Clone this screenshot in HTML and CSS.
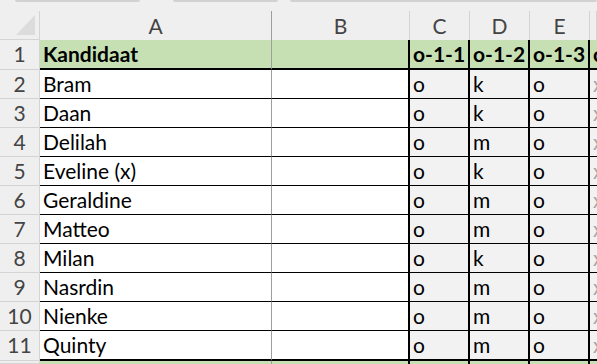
FILE: index.html
```html
<!DOCTYPE html>
<html lang="nl">
<head>
    <meta charset="UTF-8">
    <title>Kandidaten</title>
    <link rel="stylesheet" href="styles.css">
</head>
<body>

<div class="topbar">
    <span class="tab tab-name"></span>
    <span class="tab tab-fx"></span>
    <span class="tab tab-formula"></span>
</div>

<div class="sheet">
    <div class="row colheads">
        <div class="corner">
            <svg width="39" height="28" viewBox="0 0 39 28"><polygon points="35,4 35,24 16,24" fill="#dcdcdc"/></svg>
        </div>
        <div class="ch ch-a">A</div>
        <div class="ch">B</div>
        <div class="ch">C</div>
        <div class="ch">D</div>
        <div class="ch">E</div>
        <div class="ch"></div>
    </div>

    <div class="row first">
        <div class="rh">1</div>
        <div class="cell name bold">Kandidaat</div>
        <div class="cell empty"></div>
        <div class="cell score bold">o-1-1</div>
        <div class="cell score bold">o-1-2</div>
        <div class="cell score bold">o-1-3</div>
        <div class="cell last bold">o-1-4</div>
    </div>

    <div class="row">
        <div class="rh">2</div>
        <div class="cell name">Bram</div>
        <div class="cell empty"></div>
        <div class="cell score">o</div>
        <div class="cell score">k</div>
        <div class="cell score">o</div>
        <div class="cell last">x</div>
    </div>
    <div class="row">
        <div class="rh">3</div>
        <div class="cell name">Daan</div>
        <div class="cell empty"></div>
        <div class="cell score">o</div>
        <div class="cell score">k</div>
        <div class="cell score">o</div>
        <div class="cell last">x</div>
    </div>
    <div class="row">
        <div class="rh">4</div>
        <div class="cell name">Delilah</div>
        <div class="cell empty"></div>
        <div class="cell score">o</div>
        <div class="cell score">m</div>
        <div class="cell score">o</div>
        <div class="cell last">x</div>
    </div>
    <div class="row">
        <div class="rh">5</div>
        <div class="cell name">Eveline (x)</div>
        <div class="cell empty"></div>
        <div class="cell score">o</div>
        <div class="cell score">k</div>
        <div class="cell score">o</div>
        <div class="cell last">x</div>
    </div>
    <div class="row">
        <div class="rh">6</div>
        <div class="cell name">Geraldine</div>
        <div class="cell empty"></div>
        <div class="cell score">o</div>
        <div class="cell score">m</div>
        <div class="cell score">o</div>
        <div class="cell last">x</div>
    </div>
    <div class="row">
        <div class="rh">7</div>
        <div class="cell name">Matteo</div>
        <div class="cell empty"></div>
        <div class="cell score">o</div>
        <div class="cell score">m</div>
        <div class="cell score">o</div>
        <div class="cell last">x</div>
    </div>
    <div class="row">
        <div class="rh">8</div>
        <div class="cell name">Milan</div>
        <div class="cell empty"></div>
        <div class="cell score">o</div>
        <div class="cell score">k</div>
        <div class="cell score">o</div>
        <div class="cell last">x</div>
    </div>
    <div class="row">
        <div class="rh">9</div>
        <div class="cell name">Nasrdin</div>
        <div class="cell empty"></div>
        <div class="cell score">o</div>
        <div class="cell score">m</div>
        <div class="cell score">o</div>
        <div class="cell last">x</div>
    </div>
    <div class="row">
        <div class="rh">10</div>
        <div class="cell name">Nienke</div>
        <div class="cell empty"></div>
        <div class="cell score">o</div>
        <div class="cell score">m</div>
        <div class="cell score">o</div>
        <div class="cell last">x</div>
    </div>
    <div class="row final">
        <div class="rh">11</div>
        <div class="cell name">Quinty</div>
        <div class="cell empty"></div>
        <div class="cell score">o</div>
        <div class="cell score">m</div>
        <div class="cell score">o</div>
        <div class="cell last">x</div>
    </div>
    <div class="row next">
        <div class="rh"></div>
        <div class="cell name"></div>
        <div class="cell empty"></div>
        <div class="cell score"></div>
        <div class="cell score"></div>
        <div class="cell score"></div>
        <div class="cell last"></div>
    </div>
</div>

</body>
</html>
```

FILE: styles.css
```css
* {
    box-sizing: border-box;
}
body {
    margin: 0;
    background-color: #efefef;
    font-family: Lato, "Liberation Sans", sans-serif;
    font-size: 21px;
    color: #000000;
    overflow: hidden;
}
.topbar {
    height: 11px;
    display: flex;
    align-items: flex-start;
}
.tab {
    height: 2px;
    background-color: #d2d2d2;
    border-radius: 0 0 2px 2px;
}
.tab-name {
    margin-left: 15px;
    width: 125px;
}
.tab-fx {
    margin-left: 33px;
    width: 105px;
}
.tab-formula {
    margin-left: 12px;
    flex: 1;
}
.row {
    display: grid;
    grid-template-columns: 40px 232px 138px 60px 60px 60px 1fr;
    height: 29px;
}
.row.first {
    height: 30px;
}
.row.final {
    height: 30px;
}
.row.next {
    height: 3px;
}
/* kolomkoppen */
.colheads {
    background-color: #efefef;
    color: #444444;
}
.corner {
    border-right: 1px solid #d4d4d4;
    border-bottom: 1px solid #d4d4d4;
    height: 29px;
}
.corner svg {
    display: block;
}
.ch {
    text-align: center;
    line-height: 28px;
    padding-top: 1px;
    border-right: 1px solid #d4d4d4;
    border-bottom: 1px solid #d4d4d4;
}
.ch-a {
    border-right-color: #9e9e9e;
}
/* rijnummers */
.rh {
    background-color: #efefef;
    color: #444444;
    text-align: center;
    line-height: 28px;
    border-right: 1px solid #d4d4d4;
    border-bottom: 1px solid #d4d4d4;
}
.cell {
    padding: 0 3px;
    line-height: 28px;
    white-space: nowrap;
    overflow: hidden;
    border-bottom: 1px solid #000000;
}
.bold {
    font-weight: bold;
}
.name {
    background-color: #ffffff;
    border-right: 1px solid #9e9e9e;
}
.empty {
    background-color: #ffffff;
    border-right: 2px solid #000000;
}
.score {
    background-color: #f2f2f2;
    border-right: 2px solid #000000;
}
.last {
    background-color: #f2f2f2;
    color: #a6a6a6;
}
.first .cell {
    background-color: #c6e0b4;
    border-bottom-width: 2px;
    color: #000000;
}
.final .cell {
    border-bottom-width: 2px;
}
.next .cell {
    background-color: #c6e0b4;
    border-bottom: none;
}
```
